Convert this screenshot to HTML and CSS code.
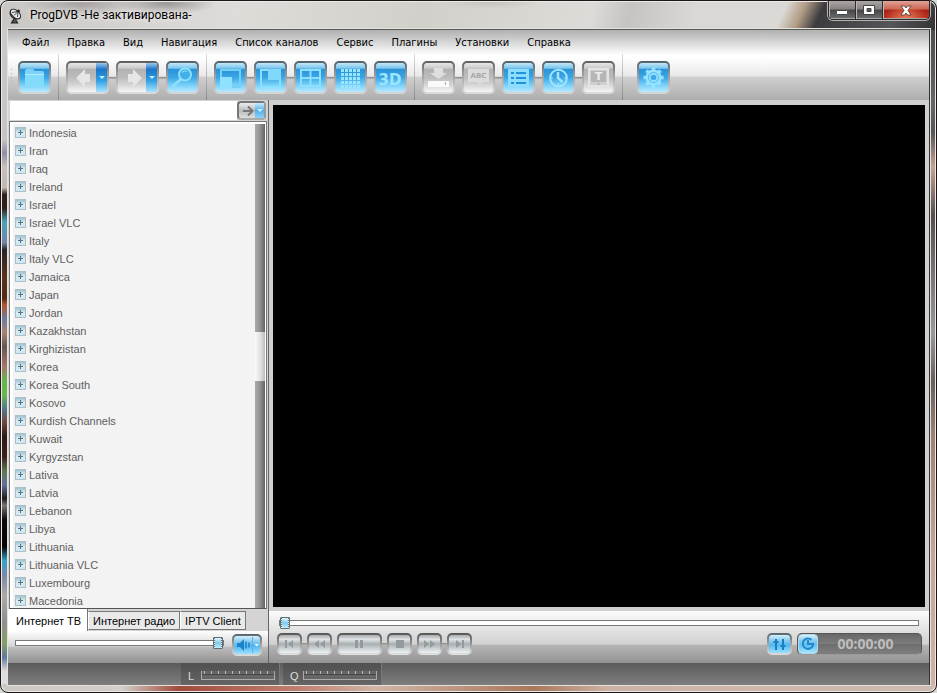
FILE: index.html
```html
<!DOCTYPE html>
<html lang="ru">
<head>
<meta charset="utf-8">
<title>ProgDVB</title>
<link rel="stylesheet" href="styles.css">
</head>
<body>
<div class="window">
  <header class="titlebar">
    <svg class="app-icon" width="14" height="16" viewBox="0 0 14 16" fill="none" stroke="#222">
      <path d="M1.500 3C0 7 4 12 9.500 10.500Z" fill="#ccc" stroke-width="1.200"/>
      <ellipse cx="6.500" cy="6" rx="6" ry="3.500" transform="rotate(42 6.500 6)" fill="#e8e8e8" stroke-width="1.100"/>
      <path d="M5 7.500L9 3.500M3 4.500L9 3.500L8.500 9" stroke-width=".8"/>
      <circle cx="9.500" cy="3" r="1" fill="#222"/>
      <path d="M5 11L2.500 15H8.500L6.500 11.500" fill="#555" stroke-width="1.200"/>
    </svg>
    <h1 class="title">ProgDVB -Не зактивирована-</h1>
    <div class="controls">
      <button class="ctl" aria-label="Свернуть"><svg width="12" height="10" viewBox="0 0 12 10"><rect x="0.500" y="5.500" width="11" height="4" rx="1" fill="#fff" stroke="#444"/></svg></button>
      <button class="ctl" aria-label="Развернуть"><svg width="12" height="10" viewBox="0 0 12 10"><path d="M.5.500H11.500V9.500H.500ZM4 3.500V6.500H8V3.500Z" fill="#fff" fill-rule="evenodd" stroke="#444"/></svg></button>
      <button class="ctl close" aria-label="Закрыть"><svg width="12" height="11" viewBox="0 0 12 11"><path d="M1 1H4.500L6 3L7.500 1H11L8 5.500L11 10H7.500L6 8L4.500 10H1L4 5.500Z" fill="#fff" stroke="#553030" stroke-width=".8"/></svg></button>
    </div>
  </header>

  <div class="client">
    <div class="top">
      <nav class="menu">
        <button>Файл</button><button>Правка</button><button>Вид</button><button>Навигация</button><button>Список каналов</button><button>Сервис</button><button>Плагины</button><button>Установки</button><button>Справка</button>
      </nav>
      <div class="toolbar">
        <div class="group first">
          <button class="tool" aria-label="Открыть"><svg width="21" height="20" viewBox="0 0 21 20"><path d="M1 3Q1 1 3 1H8.500Q10 1 10.500 3H18.500Q20 3 20 5V6H1Z" fill="#7bd3fa"/><path d="M1 6H20V17Q20 18.500 18.500 18.500H2.500Q1 18.500 1 17Z" fill="#83dbfc"/><path d="M1 6.500H20" stroke="#b6ecff"/></svg></button>
        </div>
        <div class="group">
          <button class="tool off split" aria-label="Назад"><svg width="22" height="24" viewBox="0 0 22 24"><path d="M2 12L11 3V8H16V16H11V21Z" fill="#e6e6e6"/></svg><i class="drop"></i></button><i class="link"></i>
          <button class="tool off split" aria-label="Вперёд"><svg width="22" height="24" viewBox="0 0 22 24"><path d="M18 12L9 3V8H4V16H9V21Z" fill="#e6e6e6"/></svg><i class="drop"></i></button><i class="link"></i>
          <button class="tool" aria-label="Поиск"><svg width="23" height="22" viewBox="0 0 23 22" fill="none" stroke="#8de0fc"><circle cx="14" cy="7.500" r="6" fill="#43aeea" stroke-width="2"/><path d="M11 5.500Q13 3 16 4.500" stroke-width="1"/><path d="M10 12L2.500 19" stroke-width="3" stroke-linecap="round"/></svg></button>
        </div>
        <div class="group">
          <button class="tool" aria-label="Малый экран слева"><svg width="21" height="20" viewBox="0 0 21 20"><rect x="1" y="2" width="19" height="17" fill="none" stroke="#75d0f6" stroke-width="2"/><path d="M0 9H12V20H0Z" fill="#8fe1ff"/></svg></button><i class="link"></i>
          <button class="tool" aria-label="Малый экран справа"><svg width="21" height="20" viewBox="0 0 21 20"><rect x="1" y="2" width="19" height="17" fill="none" stroke="#8ce0ff" stroke-width="2"/><path d="M8 1H21V12H8Z" fill="#80d8fa"/></svg></button><i class="link"></i>
          <button class="tool" aria-label="Четыре окна"><svg width="21" height="20" viewBox="0 0 21 20"><path d="M1 2H20V18H1ZM10.500 2V18M1 10H20" fill="none" stroke="#8ce0ff" stroke-width="2"/></svg></button><i class="link"></i>
          <button class="tool" aria-label="Мозаика"><svg width="21" height="20" viewBox="0 0 21 20"><path d="M1 2.500H20M1 6.500H20M1 10.500H20M1 14.500H20M1 18.500H20" fill="none" stroke="#98e5ff" stroke-width="3" stroke-dasharray="3 1"/></svg></button><i class="link"></i>
          <button class="tool" aria-label="3D"><svg width="25" height="20" viewBox="0 0 25 20"><text x="12" y="17" text-anchor="middle" class="icon-3d">3D</text></svg></button>
        </div>
        <div class="group">
          <button class="tool off" aria-label="Запись"><svg width="23" height="22" viewBox="0 0 23 22"><path d="M7 1H16V6H20L11.500 12L3 6H7Z" fill="#dedede"/><path d="M1 14H22V20H1Z" fill="#fafafa"/><path d="M18.500 15V18" stroke="#aaa"/></svg></button><i class="link"></i>
          <button class="tool off" aria-label="Субтитры"><svg width="21" height="20" viewBox="0 0 21 20"><path d="M0 1H21V14H14L11 18L10 14H0Z" fill="#dcdcdc"/><text x="10.500" y="10" text-anchor="middle" class="icon-abc">ABC</text></svg></button><i class="link"></i>
          <button class="tool" aria-label="Список"><svg width="21" height="20" viewBox="0 0 21 20"><path d="M0 1H21V19H0Z" fill="#8bdefd"/><path d="M3 5H6M8 5H18M3 10H6M8 10H18M3 15H6M8 15H18" stroke="#1f93dc" stroke-width="2"/></svg></button><i class="link"></i>
          <button class="tool" aria-label="Расписание"><svg width="21" height="20" viewBox="0 0 21 20" fill="none" stroke="#a0e6ff"><circle cx="10.500" cy="10" r="8.300" stroke-width="2"/><path d="M10 4V10L14.500 14" stroke-width="2.500"/><path d="M3 10H5M16 10H18M10.500 15V17"/></svg></button><i class="link"></i>
          <button class="tool off" aria-label="Телетекст"><svg width="21" height="20" viewBox="0 0 21 20"><path d="M1 1H20V18H1Z" fill="#cfcfcf" stroke="#e4e4e4" stroke-width="2"/><path d="M3 3H18V14H3Z" fill="#b6b6b6"/><text x="10.500" y="12" text-anchor="middle" class="icon-t">T</text><circle cx="10.500" cy="16" r="1" fill="#aaa"/></svg></button>
        </div>
        <div class="group last">
          <button class="tool" aria-label="Настройки"><svg width="21" height="21" viewBox="-10.500 -10.500 21 21"><g fill="none" stroke="#96e3ff"><path d="M0-10V10M-10 0H10M-7-7L7 7M7-7L-7 7" stroke-width="3.600"/><circle r="6" stroke-width="4"/><circle r="5" stroke="#4db9f1" stroke-width="1"/></g><circle r="2.800" fill="#3ba9ea"/></svg></button>
        </div>
      </div>
    </div>

    <main class="main">
      <aside class="side">
        <form class="search">
          <input type="text" aria-label="Поиск канала">
          <button type="button" class="go" aria-label="Найти"><svg width="11" height="12" viewBox="0 0 11 12"><path d="M0 6H9M5 1.500L9.500 6L5 10.500" fill="none" stroke="#777" stroke-width="2"/></svg><i class="drop"></i></button>
        </form>
        <div class="list">
          <ul class="tree">
            <li><button class="plus" aria-label="+"></button>Indonesia</li>
            <li><button class="plus" aria-label="+"></button>Iran</li>
            <li><button class="plus" aria-label="+"></button>Iraq</li>
            <li><button class="plus" aria-label="+"></button>Ireland</li>
            <li><button class="plus" aria-label="+"></button>Israel</li>
            <li><button class="plus" aria-label="+"></button>Israel VLC</li>
            <li><button class="plus" aria-label="+"></button>Italy</li>
            <li><button class="plus" aria-label="+"></button>Italy VLC</li>
            <li><button class="plus" aria-label="+"></button>Jamaica</li>
            <li><button class="plus" aria-label="+"></button>Japan</li>
            <li><button class="plus" aria-label="+"></button>Jordan</li>
            <li><button class="plus" aria-label="+"></button>Kazakhstan</li>
            <li><button class="plus" aria-label="+"></button>Kirghizistan</li>
            <li><button class="plus" aria-label="+"></button>Korea</li>
            <li><button class="plus" aria-label="+"></button>Korea South</li>
            <li><button class="plus" aria-label="+"></button>Kosovo</li>
            <li><button class="plus" aria-label="+"></button>Kurdish Channels</li>
            <li><button class="plus" aria-label="+"></button>Kuwait</li>
            <li><button class="plus" aria-label="+"></button>Kyrgyzstan</li>
            <li><button class="plus" aria-label="+"></button>Lativa</li>
            <li><button class="plus" aria-label="+"></button>Latvia</li>
            <li><button class="plus" aria-label="+"></button>Lebanon</li>
            <li><button class="plus" aria-label="+"></button>Libya</li>
            <li><button class="plus" aria-label="+"></button>Lithuania</li>
            <li><button class="plus" aria-label="+"></button>Lithuania VLC</li>
            <li><button class="plus" aria-label="+"></button>Luxembourg</li>
            <li><button class="plus" aria-label="+"></button>Macedonia</li>
          </ul>
          <div class="scroll"><i class="before"></i><i class="thumb"></i><i class="after"></i></div>
        </div>
        <div class="tabs">
          <button class="tab active">Интернет ТВ</button><button class="tab">Интернет радио</button><button class="tab">IPTV Client</button>
        </div>
        <div class="volume">
          <input type="range" aria-label="Громкость" min="0" max="100" value="100">
          <button class="small blue sound" aria-label="Звук"><svg width="26" height="16" viewBox="0 0 26 16"><path d="M3 6H6L10 2V14L6 10H3Z" fill="#1b83c8"/><path d="M12 4.500V11.500M15 5.500V10.500" stroke="#1b83c8" stroke-width="1.500"/><path d="M18.500 0V16" stroke="#5aaee0"/><path d="M20.500 7H25L22.800 9.500Z" fill="#e8faff"/></svg></button>
        </div>
      </aside>

      <section class="player">
        <div class="video"></div>
        <div class="deck">
          <input type="range" class="seek" aria-label="Позиция" min="0" max="100" value="0">
          <div class="transport">
            <button class="small" aria-label="В начало"><svg width="13" height="10" viewBox="0 0 13 10"><path d="M2 1H4V9H2ZM10 1V9L5 5Z"/></svg></button><i class="link"></i>
            <button class="small" aria-label="Назад"><svg width="13" height="10" viewBox="0 0 13 10"><path d="M6 1V9L1 5ZM12 1V9L7 5Z"/></svg></button><i class="space"></i>
            <button class="small wide" aria-label="Пауза"><svg width="13" height="10" viewBox="0 0 13 10"><path d="M2 1H5V9H2ZM7 1H10V9H7Z"/></svg></button><i class="link"></i>
            <button class="small" aria-label="Стоп"><svg width="13" height="10" viewBox="0 0 13 10"><path d="M3 1H11V9H3Z"/></svg></button><i class="space"></i>
            <button class="small" aria-label="Вперёд"><svg width="13" height="10" viewBox="0 0 13 10"><path d="M1 1V9L6 5ZM7 1V9L12 5Z"/></svg></button><i class="link"></i>
            <button class="small" aria-label="В конец"><svg width="13" height="10" viewBox="0 0 13 10"><path d="M3 1V9L8 5ZM9 1H11V9H9Z"/></svg></button>
            <button class="small blue mixer" aria-label="Эквалайзер"><svg width="15" height="12" viewBox="0 0 15 12"><path d="M4 1V12M11 1V12M1.500 4H6.500M8.500 8H13.500" stroke="#187fc4" stroke-width="2" fill="none"/></svg></button>
            <div class="clock">
              <button aria-label="Время"><svg width="14" height="14" viewBox="0 0 14 14"><path d="M10.500 2.800A5.200 5.200 0 1 0 12.200 7H7V3" fill="none" stroke="#1f8ace" stroke-width="2"/></svg></button>
              <output>00:00:00</output>
            </div>
          </div>
        </div>
      </section>
    </main>

    <footer class="status">
      <div class="level"><span>L</span><i class="meter"></i></div>
      <div class="level"><span>Q</span><i class="meter"></i></div>
    </footer>
  </div>
</div>
</body>
</html>
```

FILE: styles.css
```css
* { box-sizing: border-box; }

body {
  margin: 0;
  background: #d8d8d8;
  font: 11px/18px "Liberation Sans", sans-serif;
}

button {
  margin: 0;
  padding: 0;
  border: 0;
  background: none;
  font: inherit;
  color: inherit;
}

svg { display: block; }

.window {
  height: 100vh;
  display: flex;
  flex-direction: column;
  padding: 0 6px 7px 7px;
  border: 1px solid #1c1618;
  border-radius: 8px;
  box-shadow: inset 0 0 0 1px #eee9e4;
  overflow: hidden;
  background:
    linear-gradient(115deg, transparent 83%, #b29c86 85%, #3c3c3e 87%, #55555a 95%, #333 100%) 0 0 / 100% 29px no-repeat,
    radial-gradient(ellipse 50px 7px at 490px 1px, #c6c3bf, transparent) 0 0 / 100% 29px no-repeat,
    radial-gradient(ellipse 60px 12px at 80px 3px, #a5a29f, transparent) 0 0 / 100% 29px no-repeat,
    radial-gradient(ellipse 50px 12px at 165px 2px, #9a9794, transparent) 0 0 / 100% 29px no-repeat,
    linear-gradient(105deg, #c9c7c4, #dedcd8 25%, #d2d0cb 45%, #dddbd7 63%, #c6c4c0 67%, #dad8d4 74%, #dcdad6) 0 0 / 100% 29px no-repeat,
    linear-gradient(90deg, #ccc8c4, #d2cec8 13%, #a04b3c 19%, #bf8172 32%, #d0b4a6 40%, #a8785c 57%, #cdb3a5 65%, #cdbab0) 0 100% / 100% 8px no-repeat,
    linear-gradient(#444, #666 15%, #555 19%, #c4a292 24%, #55504e 31%, #999 48%, #66605c 55%, #9b8276 63%, #c5a597 80%, #cdb5a9) 100% 0 / 8px 100% no-repeat,
    linear-gradient(#ccc 0, #c4c4c8 20%, #8f90a4 22%, #c8c0bc 24%, #c0b8b4 27%, #30201c 28%, #30201c 30%, #47a4b8 32%, #7384a8 35%, #25242a 36%, #5b3218 40%, #4f2b18 43%, #b4562e 44%, #6b7da0 46%, #a88270 48%, #635752 50%, #a8766a 53%, #62b64a 55%, #68b850 57%, #52788c 59%, #6e4840 61%, #2e1a16 63%, #3c221c 66%, #5c7850 68%, #62709c 70%, #1a1a1e 72%, #777 73%, #0c0c10 75%, #050508 79%, #34a4c8 81%, #7888a8 83%, #aaa 86%, #8f8f8f 90%, #84a068 93%, #5e78a0 95%, #ddd 97%) 0 0 / 8px 100% no-repeat,
    #ccc;
}

/* Title bar */
.titlebar {
  flex: 0 0 28px;
  display: flex;
  align-items: flex-start;
}

.app-icon { margin: 7px 7px 0 1px; }

.title {
  flex: 1;
  margin: 5px 0 0;
  font: 12px/18px Roboto, "Open Sans", sans-serif;
  color: #000;
  text-shadow: 0 0 6px #fff;
}

.controls {
  display: flex;
  height: 19px;
  border: 1px solid #2e2a2c;
  border-top: 0;
  border-radius: 0 0 5px 5px;
  overflow: hidden;
  box-shadow: 0 0 0 1px #b8b4b2;
}

.ctl {
  width: 27px;
  display: grid;
  place-items: center;
  background: linear-gradient(#aaa6a4, #87827f 45%, #474648 50%, #6f6e70);
  border-right: 1px solid #302c2e;
  box-shadow: inset 1px 0 #bbb8b6, inset 0 -1px #aaa;
}

.close {
  width: 46px;
  border: 0;
  background: radial-gradient(ellipse at 50% 100%, #e97b58, transparent 65%), linear-gradient(#e1a396, #ca6555 45%, #aa2114 50%, #b93222);
}

/* Client area */
.client {
  flex: 1;
  min-height: 0;
  display: flex;
  flex-direction: column;
  border-top: 1px solid #555b55;
  border-right: 1px solid #333;
  box-shadow: 0 0 0 1px #e5e2de;
}

.top { background: linear-gradient(#b0b0b0, #fff 36%, #fdfdfd 42%, #e8e8e8 66%, #d0d0d0 67%, #adadad); }

.menu {
  display: flex;
  gap: 18px;
  padding: 4px 14px 2px;
  font: 11px/18px "DejaVu Sans Condensed", "DejaVu Sans", sans-serif;
  color: #000;
}

.toolbar { display: flex; }

.group {
  display: flex;
  align-items: center;
  padding: 7px 7px 6px 6px;
  border-style: solid;
  border-width: 0 1px 0 0;
  border-image: linear-gradient(#ddd, #888) 1;
  margin-right: 1px;
}

.group.first {
  padding-left: 10px;
  background: repeating-linear-gradient(#aaa 0 1px, transparent 1px 4px) 3px 15px / 1px 15px no-repeat;
}

.group.last { padding-left: 13px; border: 0; }

.link, .space { flex: 0 0 7px; height: 2px; }
.link { background: linear-gradient(#888, #b4b4b4); }

.tool {
  width: 33px;
  height: 33px;
  display: flex;
  align-items: center;
  justify-content: center;
  border: 2px solid transparent;
  border-radius: 5px;
  background:
    linear-gradient(#c3e8f8, #7cc6ec 18%, #2b93d8 22%, #3ba6e6 50%, #76cff8 75%, #b8eaff) padding-box,
    linear-gradient(#4e5e68, #8c9499 35%, #d8d8d8) border-box;
}

.tool.off {
  background:
    linear-gradient(#e8e8e8, #cacaca 18%, #b2b2b2 22%, #bcbcbc 50%, #d5d5d5 75%, #f6f6f6) padding-box,
    linear-gradient(#5c5c5c, #999 35%, #dedede) border-box;
}

.split {
  width: 43px;
  justify-content: space-between;
  padding-left: 6px;
}

.drop {
  align-self: stretch;
  width: 11px;
  display: grid;
  place-items: center;
  background: linear-gradient(#9cc9ea, #1b76c8 22%, #2e9fe3 60%, #a8e4ff);
}

.drop::after {
  content: "";
  border: 3px solid transparent;
  border-top-color: #c4efff;
  border-bottom: 0;
}

.icon-3d { font: bold 15px "DejaVu Sans", sans-serif; fill: #9ce5ff; }
.icon-abc { font: bold 7px "DejaVu Sans", sans-serif; fill: #a8a8a8; }
.icon-t { font: bold 11px "DejaVu Sans", sans-serif; fill: #eee; }

/* Main split */
.main {
  flex: 1;
  min-height: 0;
  display: grid;
  grid-template-columns: 261px minmax(0, 1fr);
}

.side {
  min-height: 0;
  display: flex;
  flex-direction: column;
  background: #d4d4d4;
  border-right: 1px solid #666;
}

.search {
  display: flex;
  padding: 1px 2px 1px 2px;
}

.search input {
  flex: 1;
  min-width: 0;
  height: 19px;
  padding: 0 4px;
  border: 0;
  background: #fff;
  font: inherit;
}

.go {
  width: 29px;
  display: flex;
  align-items: center;
  justify-content: space-between;
  padding-left: 4px;
  border: 2px solid #777;
  border-color: #777 #9a9a9a #aaa #777;
  border-radius: 4px;
  background: linear-gradient(#eee, #bbb 50%, #ddd);
}

.go .drop { width: 9px; background: linear-gradient(#c9ebfb, #54b0ea 50%, #86d3fa); }

.list {
  flex: 1;
  min-height: 0;
  display: flex;
  margin: 0 1px;
  padding: 2px 1px 0 3px;
  border: 1px solid #777;
  border-bottom-color: #555;
  background: #fff;
}

.tree {
  flex: 1;
  margin: 0;
  padding: 0 0 0 2px;
  list-style: none;
  overflow: hidden;
  background: #f3f3f3;
  color: #606060;
}

.tree li { display: flex; align-items: center; gap: 3px; height: 18px; }

.plus {
  width: 11px;
  height: 11px;
  margin-bottom: 2px;
  border: 1px solid #a9c0ca;
  background:
    linear-gradient(#4f7788, #4f7788) center / 5px 1px no-repeat,
    linear-gradient(#4f7788, #4f7788) center / 1px 5px no-repeat,
    linear-gradient(#a3c3d0, #dcebf0 50%, #d0e6ee);
}

.scroll {
  width: 10px;
  display: flex;
  flex-direction: column;
}

.before { flex: 208; }
.thumb { flex: 50; background: linear-gradient(90deg, #fafafa, #ddd 60%, #bbb); }
.after { flex: 227; }
.before, .after { background: linear-gradient(90deg, #aaa, #999 40%, #666); }

.tabs {
  display: flex;
  align-items: flex-start;
  height: 22px;
  color: #000;
}

.tab {
  height: 19px;
  margin-top: 2px;
  padding: 0 4px;
  line-height: 16px;
  background: #e9e9e9;
  border: 1px solid #777;
  border-left-color: #fff;
}

.tab.active {
  height: 22px;
  margin-top: 0;
  padding: 2px 6px 0 8px;
  background: #fff;
  border: 0;
  border-right: 1px solid #777;
}

.volume {
  height: 32px;
  display: flex;
  align-items: flex-start;
  gap: 8px;
  padding: 3px 6px 0 7px;
  background: linear-gradient(#fff, #d3d3d3 48%, #bcbcbc 50%, #929292);
}

/* Sliders */
input[type="range"] {
  -webkit-appearance: none;
  appearance: none;
  flex: 1;
  min-width: 0;
  height: 18px;
  margin: 0;
  background: none;
}

input[type="range"]::-webkit-slider-runnable-track {
  height: 6px;
  background: #fff;
  border: 1px solid #777;
}

input[type="range"]::-webkit-slider-thumb {
  -webkit-appearance: none;
  width: 10px;
  height: 12px;
  margin-top: -4px;
  border: 1px solid #5f7078;
  border-radius: 1px;
  background:
    repeating-linear-gradient(#5f7078 0 1px, #eee 1px 2px) 0 0 / 1px 100% no-repeat,
    repeating-linear-gradient(#5f7078 0 1px, #eee 1px 2px) 100% 0 / 1px 100% no-repeat,
    linear-gradient(#e3f7ff, #7cc9ec 50%, #c0ecfc);
}

/* Player */
.player {
  min-width: 0;
  display: flex;
  flex-direction: column;
  background: #cfcfcf;
}

.video { flex: 1; margin: 5px 4px 4px; background: #000; }

.deck { background: linear-gradient(#fbfbfb, #d0d0d0 64%, #b4b4b4 66%, #939393); }

.deck .seek { display: block; width: calc(100% - 20px); margin: 3px 10px 1px; }

.transport {
  display: flex;
  align-items: center;
  padding: 0 7px 8px 8px;
}

.transport .link, .transport .space { flex-basis: 5px; }

.small {
  width: 25px;
  height: 22px;
  display: grid;
  place-items: center;
  border: 2px solid transparent;
  border-radius: 5px;
  background:
    linear-gradient(#a9acae, #e1e4e6 25%, #a9afb2 50%, #bdc4c7 65%, #edf2f4) padding-box,
    linear-gradient(#555, #888 40%, #e4e4e4) border-box;
}

.small path { fill: #959a9d; }
.wide { width: 45px; }

.small.blue {
  background:
    linear-gradient(#d4f0fc, #8accf0 30%, #52b7ee 55%, #9de1ff) padding-box,
    linear-gradient(#57646c, #999 40%, #ddd) border-box;
}

.small.blue path { fill: #1b83c8; }
.small.sound path:last-child { fill: #e8faff; }
.sound { width: 30px; }
.mixer { margin-left: auto; margin-right: 5px; }

.clock {
  display: flex;
  width: 125px;
  height: 22px;
  border: 1px solid #555;
  border-bottom-color: #999;
  border-radius: 5px;
  overflow: hidden;
  background: linear-gradient(#686868, #7c7c7c 48%, #6e6e6e 50%, #7e7e7e);
}

.clock button {
  width: 20px;
  display: grid;
  place-items: center;
  border: 1px solid #b6d9e8;
  border-radius: 4px;
  background: linear-gradient(#d4f0fc, #8accf0 30%, #62c0f1 55%, #a9e6ff);
}

.clock output {
  flex: 1;
  padding-right: 8px;
  text-align: center;
  font: bold 14px/20px "Noto Sans", sans-serif;
  color: #bdbdbd;
}

/* Status bar */
.status {
  display: flex;
  gap: 3px;
  height: 22px;
  padding-left: 173px;
  background: linear-gradient(#5b5b5b, #7e7e7e);
}

.level {
  width: 99px;
  display: flex;
  align-items: center;
  gap: 5px;
  padding: 3px 4px 0 7px;
  background: linear-gradient(#505050, #656565);
  border-right: 1px solid #777;
  color: #ddd;
}

.level span { width: 8px; }

.meter {
  flex: 1;
  height: 9px;
  border: 1px solid #aaa;
  border-top: 0;
  background:
    repeating-linear-gradient(90deg, #bbb 0 1px, transparent 1px 7px) 2px 0 / 100% 3px no-repeat,
    linear-gradient(#444, #444) 0 3px / 100% 1px no-repeat,
    #666;
}
```
